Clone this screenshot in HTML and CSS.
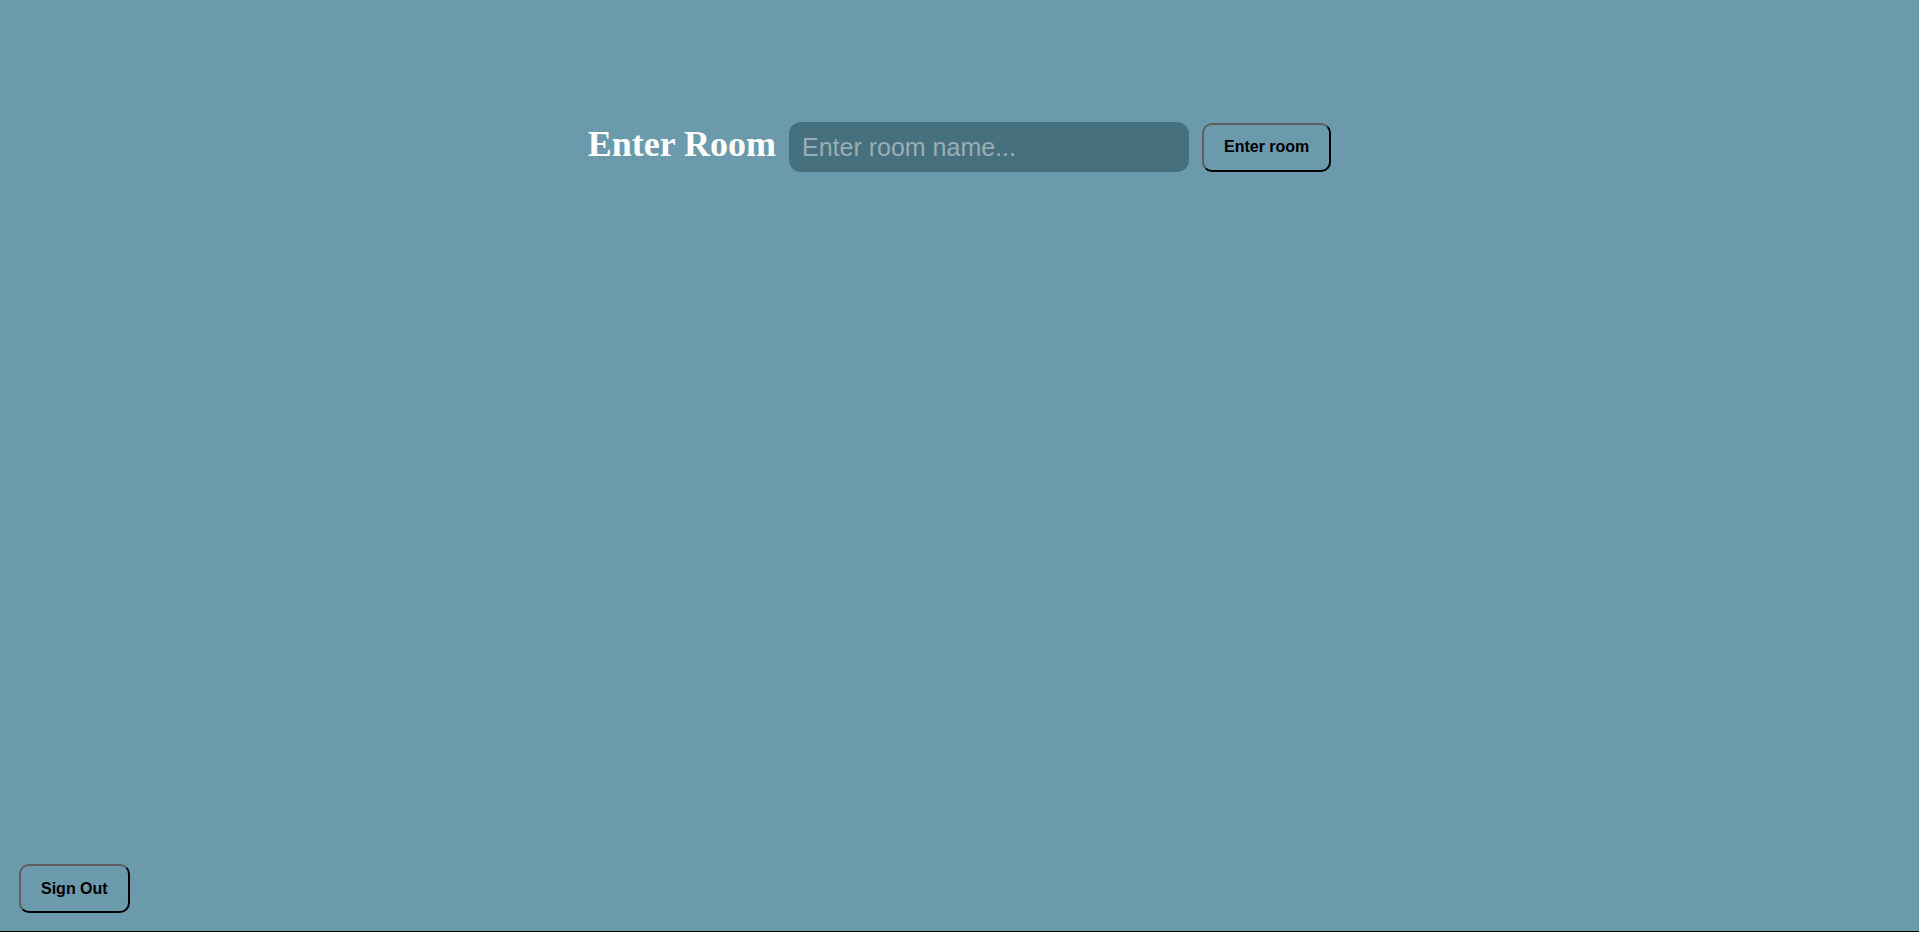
FILE: index.html
```html
<!DOCTYPE html>
<html lang="en">
<head>
<meta charset="utf-8">
<title>Enter Room</title>
<link rel="stylesheet" href="styles.css">
</head>
<body>
<div class="page">
  <form class="room-row">
    <h1 class="room-title">Enter Room</h1>
    <input class="room-input" type="text" placeholder="Enter room name...">
    <button class="btn" type="button">Enter room</button>
  </form>
  <div class="footer">
    <button class="btn" type="button">Sign Out</button>
  </div>
</div>
</body>
</html>
```

FILE: styles.css
```css
* { box-sizing: border-box; }
html, body { margin: 0; padding: 0; height: 100%; }
body {
  background: #6a9aab;
  font-family: "Liberation Sans", Arial, sans-serif;
}
.page {
  min-height: 100vh;
  display: flex;
  flex-direction: column;
  border-bottom: 1px solid #000;
}
.room-row {
  margin: 122px 0 0;
  display: flex;
  align-items: center;
  justify-content: center;
  gap: 13px;
}
.room-title {
  margin: 0;
  padding-bottom: 5px;
  font-family: "Liberation Serif", "Times New Roman", serif;
  font-weight: bold;
  font-size: 36px;
  color: #fff;
  line-height: 1.15;
}
.room-input {
  width: 400px;
  height: 50px;
  border: none;
  border-radius: 12px;
  background: #46707e;
  padding: 0 13px;
  font-family: "Liberation Sans", Arial, sans-serif;
  font-size: 25px;
  color: #fff;
  outline: none;
}
.room-input::placeholder { color: #9aadb3; }
.btn {
  height: 49px;
  padding: 0 20px;
  background: transparent;
  border: 2px solid;
  border-color: #5e5e5e #000 #000 #5e5e5e;
  border-radius: 10px;
  font-family: "Liberation Sans", Arial, sans-serif;
  font-weight: bold;
  font-size: 16px;
  color: #000;
}
.footer {
  margin-top: auto;
  padding: 0 0 18px 19px;
}
```
